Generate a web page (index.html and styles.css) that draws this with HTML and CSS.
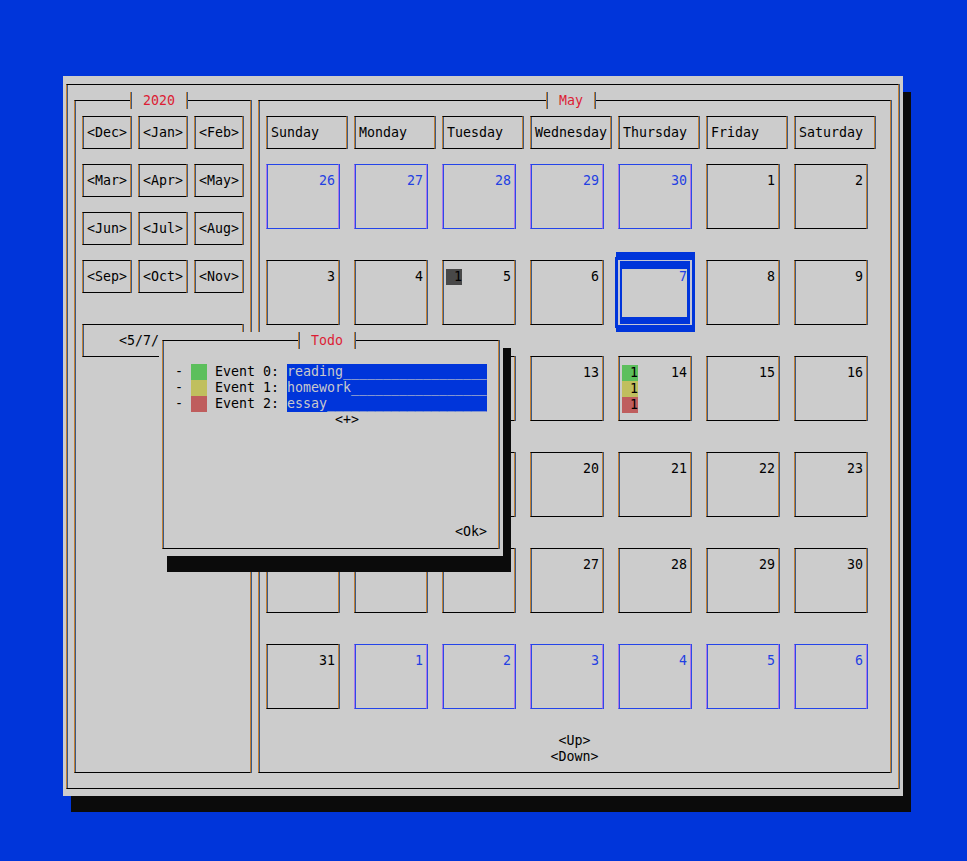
FILE: index.html
```html
<!DOCTYPE html>
<html>
<head>
<meta charset="utf-8">
<title>Calendar</title>
<link rel="stylesheet" href="styles.css">
</head>
<body>
<div class="screen">
  <div class="win">
    <div class="box frame">
      <div class="box year">
        <div class="label lbl-year">2020</div>
        <div class="months">
          <div class="box btn">&lt;Dec&gt;</div>
          <div class="box btn">&lt;Jan&gt;</div>
          <div class="box btn">&lt;Feb&gt;</div>
          <div class="box btn">&lt;Mar&gt;</div>
          <div class="box btn">&lt;Apr&gt;</div>
          <div class="box btn">&lt;May&gt;</div>
          <div class="box btn">&lt;Jun&gt;</div>
          <div class="box btn">&lt;Jul&gt;</div>
          <div class="box btn">&lt;Aug&gt;</div>
          <div class="box btn">&lt;Sep&gt;</div>
          <div class="box btn">&lt;Oct&gt;</div>
          <div class="box btn">&lt;Nov&gt;</div>
        </div>
        <div class="box datebtn">&lt;5/7/2020&gt;</div>
      </div>
      <div class="box cal">
        <div class="label lbl-may">May</div>
        <div class="heads">
          <div class="box head">Sunday</div>
          <div class="box head">Monday</div>
          <div class="box head">Tuesday</div>
          <div class="box head">Wednesday</div>
          <div class="box head">Thursday</div>
          <div class="box head">Friday</div>
          <div class="box head">Saturday</div>
        </div>
        <div class="days">
          <div class="box cell other"><div class="in"><span class="num">26</span></div></div>
          <div class="box cell other"><div class="in"><span class="num">27</span></div></div>
          <div class="box cell other"><div class="in"><span class="num">28</span></div></div>
          <div class="box cell other"><div class="in"><span class="num">29</span></div></div>
          <div class="box cell other"><div class="in"><span class="num">30</span></div></div>
          <div class="box cell"><div class="in"><span class="num">1</span></div></div>
          <div class="box cell"><div class="in"><span class="num">2</span></div></div>

          <div class="box cell"><div class="in"><span class="num">3</span></div></div>
          <div class="box cell"><div class="in"><span class="num">4</span></div></div>
          <div class="box cell"><div class="in"><div class="marks"><span class="mk mk-dark">1</span></div><span class="num">5</span></div></div>
          <div class="box cell"><div class="in"><span class="num">6</span></div></div>
          <div class="box cell sel"><div class="in"><span class="num">7</span></div></div>
          <div class="box cell"><div class="in"><span class="num">8</span></div></div>
          <div class="box cell"><div class="in"><span class="num">9</span></div></div>

          <div class="box cell"><div class="in"><span class="num">10</span></div></div>
          <div class="box cell"><div class="in"><span class="num">11</span></div></div>
          <div class="box cell"><div class="in"><span class="num">12</span></div></div>
          <div class="box cell"><div class="in"><span class="num">13</span></div></div>
          <div class="box cell"><div class="in"><div class="marks"><span class="mk mk-green">1</span><span class="mk mk-yellow">1</span><span class="mk mk-red">1</span></div><span class="num">14</span></div></div>
          <div class="box cell"><div class="in"><span class="num">15</span></div></div>
          <div class="box cell"><div class="in"><span class="num">16</span></div></div>

          <div class="box cell"><div class="in"><span class="num">17</span></div></div>
          <div class="box cell"><div class="in"><span class="num">18</span></div></div>
          <div class="box cell"><div class="in"><span class="num">19</span></div></div>
          <div class="box cell"><div class="in"><span class="num">20</span></div></div>
          <div class="box cell"><div class="in"><span class="num">21</span></div></div>
          <div class="box cell"><div class="in"><span class="num">22</span></div></div>
          <div class="box cell"><div class="in"><span class="num">23</span></div></div>

          <div class="box cell"><div class="in"><span class="num">24</span></div></div>
          <div class="box cell"><div class="in"><span class="num">25</span></div></div>
          <div class="box cell"><div class="in"><span class="num">26</span></div></div>
          <div class="box cell"><div class="in"><span class="num">27</span></div></div>
          <div class="box cell"><div class="in"><span class="num">28</span></div></div>
          <div class="box cell"><div class="in"><span class="num">29</span></div></div>
          <div class="box cell"><div class="in"><span class="num">30</span></div></div>

          <div class="box cell"><div class="in"><span class="num">31</span></div></div>
          <div class="box cell other"><div class="in"><span class="num">1</span></div></div>
          <div class="box cell other"><div class="in"><span class="num">2</span></div></div>
          <div class="box cell other"><div class="in"><span class="num">3</span></div></div>
          <div class="box cell other"><div class="in"><span class="num">4</span></div></div>
          <div class="box cell other"><div class="in"><span class="num">5</span></div></div>
          <div class="box cell other"><div class="in"><span class="num">6</span></div></div>
        </div>
        <div class="nav">
          <div>&lt;Up&gt;</div>
          <div>&lt;Down&gt;</div>
        </div>
      </div>
    </div>

    <div class="dialog">
      <div class="box dframe">
        <div class="label lbl-todo">Todo</div>
        <div class="events">
          <div class="ev">- <span class="sw sw-green"></span> Event 0: <span class="field">reading__________________</span></div>
          <div class="ev">- <span class="sw sw-yellow"></span> Event 1: <span class="field">homework_________________</span></div>
          <div class="ev">- <span class="sw sw-red"></span> Event 2: <span class="field">essay____________________</span></div>
        </div>
        <div class="add">&lt;+&gt;</div>
        <div class="ok">&lt;Ok&gt;</div>
      </div>
    </div>
  </div>
</div>
</body>
</html>
```

FILE: styles.css
```css
* {
  box-sizing: border-box;
}

html, body {
  margin: 0;
  padding: 0;
  background: #0035da;
  height: 861px;
  overflow: hidden;
}

body {
  font-family: "DejaVu Sans Mono", "Liberation Mono", monospace;
  font-size: 13.29px;
  line-height: 16px;
  color: #000;
}

.screen {
  padding: 76px 0 0 63px;
}

.win {
  position: relative;
  width: 840px;
  height: 720px;
  background: #cccccc;
  box-shadow: 8px 16px 0 0 #0b0b0b;
  padding: 8px 0 0 3px;
}

/* terminal-style line box: black horizontals, orange/dark fringed verticals */
.box {
  border: 1px solid #000;
  border-left-color: #c47f32;
  border-right-color: #c47f32;
  box-shadow: inset 1px 0 0 0 #3a5a86, 1px 0 0 0 #3a5a86;
}

.label {
  position: absolute;
  top: -9px;
  height: 17px;
  padding-top: 1px;
  background: #cccccc;
  border-left: 1px solid #c47f32;
  border-right: 1px solid #c47f32;
  box-shadow: inset 1px 0 0 0 #3a5a86, 1px 0 0 0 #3a5a86;
  padding-left: 12px;
  color: #dc1c34;
  white-space: pre;
}

.frame {
  width: 833px;
  height: 705px;
  display: flex;
  align-items: flex-start;
  gap: 7px;
  padding: 15px 0 0 7px;
}

.year {
  position: relative;
  width: 177px;
  height: 673px;
  padding: 15px 0 0 7px;
}

.lbl-year {
  left: 55px;
  width: 57px;
}

.months {
  display: grid;
  grid-template-columns: 49px 49px 49px;
  grid-auto-rows: 33px;
  column-gap: 7px;
  row-gap: 15px;
}

.btn {
  padding: 8px 0 0 4px;
  white-space: pre;
}

.datebtn {
  margin-top: 31px;
  width: 161px;
  height: 33px;
  padding: 8px 0 0 36px;
  white-space: pre;
}

.cal {
  position: relative;
  width: 633px;
  height: 673px;
  padding: 15px 0 0 7px;
}

.lbl-may {
  left: 287px;
  width: 49px;
}

.heads,
.days {
  display: grid;
  grid-template-columns: repeat(7, 81px);
  column-gap: 7px;
}

.heads {
  grid-auto-rows: 33px;
  margin-bottom: 15px;
}

.head {
  padding: 8px 0 0 4px;
  white-space: pre;
}

.days {
  grid-auto-rows: 65px;
  row-gap: 31px;
}

.cell {
  width: 73px;
  padding: 8px 3px 7px 3px;
}

.in {
  display: flex;
  height: 48px;
}

.num {
  margin-left: auto;
}

.marks {
  display: flex;
  flex-direction: column;
}

.mk {
  width: 16px;
  height: 16px;
  text-align: right;
}

.mk-dark { background: #484848; }
.mk-green { background: #5cbf5c; }
.mk-yellow { background: #c0bf5e; }
.mk-red { background: #bf5d5d; }

.cell.other {
  border-color: #2444ea;
  border-left-color: #b07ae6;
  border-right-color: #b07ae6;
  box-shadow: inset 1px 0 0 0 #2a4ae8, 1px 0 0 0 #2a4ae8;
  color: #1f40e2;
}

.cell.sel {
  background: #0035da;
  border-color: #c4c6d6;
  box-shadow:
    inset 1px 0 0 0 #c4c6d6,
    1px 0 0 0 #c4c6d6,
    0 0 0 3px #0035da,
    1px -5px 0 3px #0035da,
    1px 4px 0 3px #0035da;
  color: #1f40e2;
}

.cell.sel .in {
  background: #cccccc;
}

.nav {
  margin-top: 24px;
  margin-left: -7px;
  text-align: center;
}

/* popup dialog */
.dialog {
  position: absolute;
  left: 96px;
  top: 256px;
  width: 344px;
  height: 224px;
  background: #cccccc;
  box-shadow: 8px 16px 0 0 #0b0b0b;
  padding: 8px 0 0 3px;
}

.dframe {
  position: relative;
  width: 337px;
  height: 209px;
  padding-top: 23px;
}

.lbl-todo {
  left: 135px;
  width: 57px;
}

.ev {
  padding-left: 12px;
  white-space: pre;
  height: 16px;
}

.sw {
  display: inline-block;
  width: 16px;
  height: 16px;
  vertical-align: top;
}

.sw-green { background: #5cbf5c; }
.sw-yellow { background: #c0bf5e; }
.sw-red { background: #bf5d5d; }

.field {
  display: inline-block;
  width: 200px;
  height: 16px;
  vertical-align: top;
  background: #0035da;
  color: #c8c8cc;
  overflow: hidden;
}

.add {
  padding-left: 172px;
  white-space: pre;
}

.ok {
  margin-top: 96px;
  padding-left: 292px;
  white-space: pre;
}
```
